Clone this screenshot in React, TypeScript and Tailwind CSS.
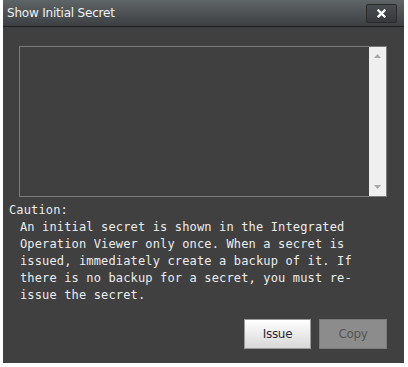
import React from "react";

export default function App() {
  return (
    <div className="w-[408px] h-[367px] bg-white">
      <div className="ml-[3px] w-[401px] h-[363px] bg-[#404040] flex flex-col">
        <div className="h-[27px] flex items-center justify-between pl-[4px] pr-[7px] bg-gradient-to-b from-[#5f6467] to-[#3d4043] border-b border-[#1e1e1e]">
          <span className="text-[12px] text-[#f0f0f0] leading-none" style={{ fontFamily: '"DejaVu Sans", sans-serif', letterSpacing: "-0.2px" }}>
            Show Initial Secret
          </span>
          <button className="w-[31px] h-[19px] rounded-[2px] border border-[#2a2a2a] bg-gradient-to-b from-[#4a4d50] to-[#36393b] flex items-center justify-center">
            <svg width="9" height="9" viewBox="0 0 9 9">
              <path d="M1.5 1.5 L7.5 7.5 M7.5 1.5 L1.5 7.5" stroke="#ffffff" strokeWidth="2.4" strokeLinecap="square" />
            </svg>
          </button>
        </div>
        <div className="flex-1 flex flex-col px-[16px] pt-[19px]">
          <div className="w-[368px] h-[151px] border border-[#7a7a7a] flex">
            <div className="flex-1" />
            <div className="w-[17px] bg-[#efefef] flex flex-col items-center justify-between py-[7px]">
              <svg width="7" height="4" viewBox="0 0 7 4"><path d="M0 4 L3.5 0 L7 4 Z" fill="#a8a8a8" /></svg>
              <svg width="7" height="4" viewBox="0 0 7 4"><path d="M0 0 L3.5 4 L7 0 Z" fill="#a8a8a8" /></svg>
            </div>
          </div>
          <div className="-ml-[10px] mt-[5px] text-[12px] leading-[17px] tracking-[0.15px] text-[#ececec]" style={{ fontFamily: '"DejaVu Sans Mono", monospace' }}>
            <div>Caution:</div>
            <div className="pl-[11px] w-[375px]">
              An initial secret is shown in the Integrated Operation Viewer only once. When a secret is issued, immediately create a backup of it. If there is no backup for a secret, you must re-issue the secret.
            </div>
          </div>
          <div className="flex justify-end gap-[8px] mt-[15px] pr-[1px]">
            <button className="w-[67px] h-[30px] border border-[#9a9a9a] bg-gradient-to-b from-[#ffffff] to-[#d8d8d8] text-[12px] text-[#2a2a3a]" style={{ fontFamily: '"DejaVu Sans", sans-serif', letterSpacing: "-0.3px" }}>
              Issue
            </button>
            <button className="w-[68px] h-[30px] border border-[#7a7a7a] bg-[#8c8c8c] text-[12px] text-[#555555]" style={{ fontFamily: '"DejaVu Sans", sans-serif', letterSpacing: "-0.3px" }}>
              Copy
            </button>
          </div>
        </div>
      </div>
    </div>
  );
}
